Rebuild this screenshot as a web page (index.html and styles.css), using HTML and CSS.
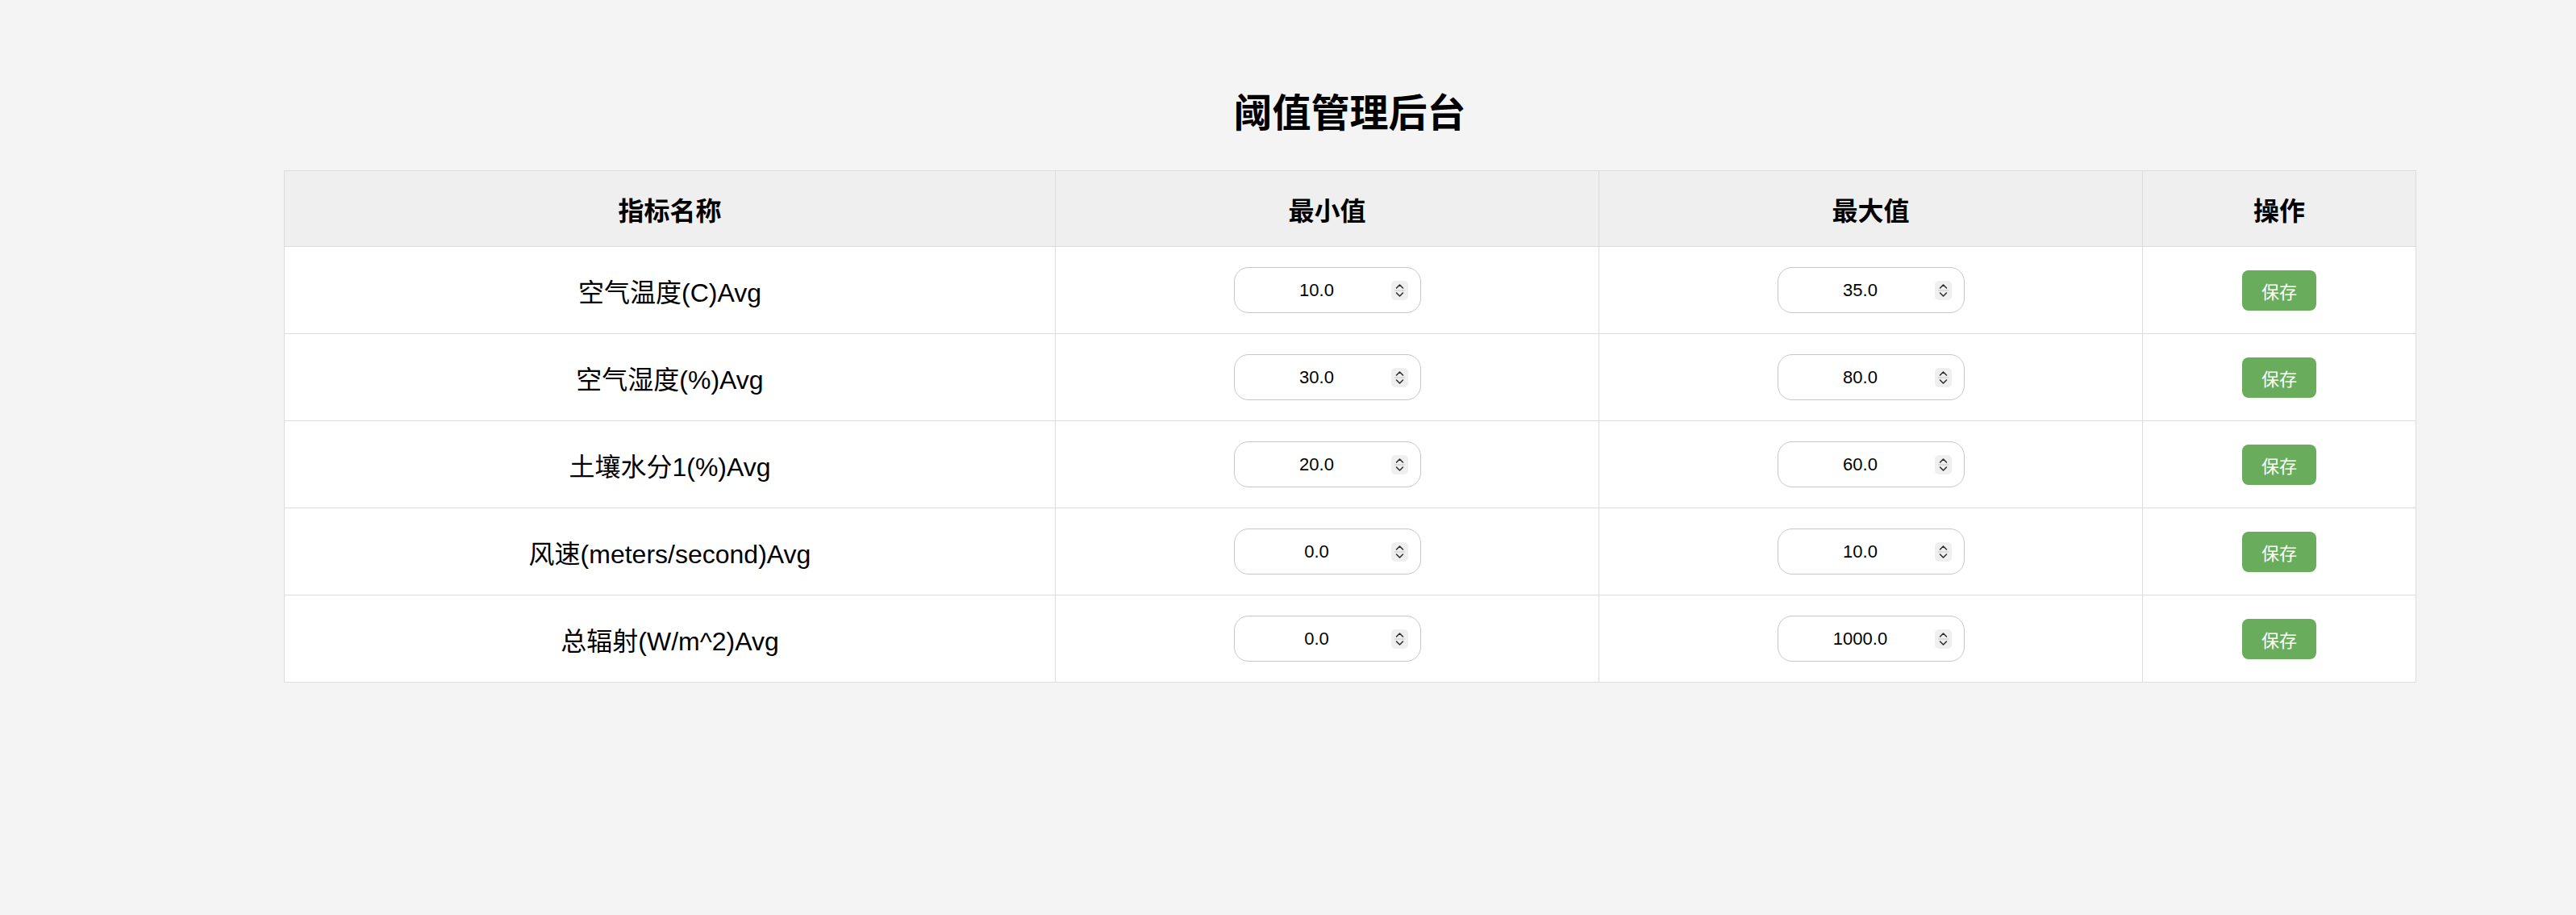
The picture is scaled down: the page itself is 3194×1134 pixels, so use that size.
FILE: index.html
```html
<!DOCTYPE html>
<html lang="zh-CN">
<head>
<meta charset="utf-8">
<title>阈值管理后台</title>
<link rel="stylesheet" href="styles.css">
</head>
<body>
<div class="page">
  <div class="panel">
    <h1 class="title">阈值管理后台</h1>
    <table class="grid">
      <colgroup>
        <col class="c-name"><col class="c-min"><col class="c-max"><col class="c-op">
      </colgroup>
      <thead>
        <tr><th>指标名称</th><th>最小值</th><th>最大值</th><th>操作</th></tr>
      </thead>
      <tbody>
        <tr>
          <td class="name">空气温度(C)Avg</td>
          <td><div class="num"><input class="num-input" type="text" value="10.0"><svg class="spin" viewBox="0 0 21 24" width="21" height="24"><rect x="0" y="0" width="21" height="24" rx="5" fill="#efefef"/><path d="M6.5 9 L10.5 5 L14.5 9" fill="none" stroke="#2a2a2a" stroke-width="1.5" stroke-linecap="round" stroke-linejoin="round"/><line x1="4" y1="12" x2="17" y2="12" stroke="#cfcfcf" stroke-width="1.2"/><path d="M6.5 15 L10.5 19 L14.5 15" fill="none" stroke="#2a2a2a" stroke-width="1.5" stroke-linecap="round" stroke-linejoin="round"/></svg></div></td>
          <td><div class="num"><input class="num-input" type="text" value="35.0"><svg class="spin" viewBox="0 0 21 24" width="21" height="24"><rect x="0" y="0" width="21" height="24" rx="5" fill="#efefef"/><path d="M6.5 9 L10.5 5 L14.5 9" fill="none" stroke="#2a2a2a" stroke-width="1.5" stroke-linecap="round" stroke-linejoin="round"/><line x1="4" y1="12" x2="17" y2="12" stroke="#cfcfcf" stroke-width="1.2"/><path d="M6.5 15 L10.5 19 L14.5 15" fill="none" stroke="#2a2a2a" stroke-width="1.5" stroke-linecap="round" stroke-linejoin="round"/></svg></div></td>
          <td><button class="save" type="button">保存</button></td>
        </tr>
        <tr>
          <td class="name">空气湿度(%)Avg</td>
          <td><div class="num"><input class="num-input" type="text" value="30.0"><svg class="spin" viewBox="0 0 21 24" width="21" height="24"><rect x="0" y="0" width="21" height="24" rx="5" fill="#efefef"/><path d="M6.5 9 L10.5 5 L14.5 9" fill="none" stroke="#2a2a2a" stroke-width="1.5" stroke-linecap="round" stroke-linejoin="round"/><line x1="4" y1="12" x2="17" y2="12" stroke="#cfcfcf" stroke-width="1.2"/><path d="M6.5 15 L10.5 19 L14.5 15" fill="none" stroke="#2a2a2a" stroke-width="1.5" stroke-linecap="round" stroke-linejoin="round"/></svg></div></td>
          <td><div class="num"><input class="num-input" type="text" value="80.0"><svg class="spin" viewBox="0 0 21 24" width="21" height="24"><rect x="0" y="0" width="21" height="24" rx="5" fill="#efefef"/><path d="M6.5 9 L10.5 5 L14.5 9" fill="none" stroke="#2a2a2a" stroke-width="1.5" stroke-linecap="round" stroke-linejoin="round"/><line x1="4" y1="12" x2="17" y2="12" stroke="#cfcfcf" stroke-width="1.2"/><path d="M6.5 15 L10.5 19 L14.5 15" fill="none" stroke="#2a2a2a" stroke-width="1.5" stroke-linecap="round" stroke-linejoin="round"/></svg></div></td>
          <td><button class="save" type="button">保存</button></td>
        </tr>
        <tr>
          <td class="name">土壤水分1(%)Avg</td>
          <td><div class="num"><input class="num-input" type="text" value="20.0"><svg class="spin" viewBox="0 0 21 24" width="21" height="24"><rect x="0" y="0" width="21" height="24" rx="5" fill="#efefef"/><path d="M6.5 9 L10.5 5 L14.5 9" fill="none" stroke="#2a2a2a" stroke-width="1.5" stroke-linecap="round" stroke-linejoin="round"/><line x1="4" y1="12" x2="17" y2="12" stroke="#cfcfcf" stroke-width="1.2"/><path d="M6.5 15 L10.5 19 L14.5 15" fill="none" stroke="#2a2a2a" stroke-width="1.5" stroke-linecap="round" stroke-linejoin="round"/></svg></div></td>
          <td><div class="num"><input class="num-input" type="text" value="60.0"><svg class="spin" viewBox="0 0 21 24" width="21" height="24"><rect x="0" y="0" width="21" height="24" rx="5" fill="#efefef"/><path d="M6.5 9 L10.5 5 L14.5 9" fill="none" stroke="#2a2a2a" stroke-width="1.5" stroke-linecap="round" stroke-linejoin="round"/><line x1="4" y1="12" x2="17" y2="12" stroke="#cfcfcf" stroke-width="1.2"/><path d="M6.5 15 L10.5 19 L14.5 15" fill="none" stroke="#2a2a2a" stroke-width="1.5" stroke-linecap="round" stroke-linejoin="round"/></svg></div></td>
          <td><button class="save" type="button">保存</button></td>
        </tr>
        <tr>
          <td class="name">风速(meters/second)Avg</td>
          <td><div class="num"><input class="num-input" type="text" value="0.0"><svg class="spin" viewBox="0 0 21 24" width="21" height="24"><rect x="0" y="0" width="21" height="24" rx="5" fill="#efefef"/><path d="M6.5 9 L10.5 5 L14.5 9" fill="none" stroke="#2a2a2a" stroke-width="1.5" stroke-linecap="round" stroke-linejoin="round"/><line x1="4" y1="12" x2="17" y2="12" stroke="#cfcfcf" stroke-width="1.2"/><path d="M6.5 15 L10.5 19 L14.5 15" fill="none" stroke="#2a2a2a" stroke-width="1.5" stroke-linecap="round" stroke-linejoin="round"/></svg></div></td>
          <td><div class="num"><input class="num-input" type="text" value="10.0"><svg class="spin" viewBox="0 0 21 24" width="21" height="24"><rect x="0" y="0" width="21" height="24" rx="5" fill="#efefef"/><path d="M6.5 9 L10.5 5 L14.5 9" fill="none" stroke="#2a2a2a" stroke-width="1.5" stroke-linecap="round" stroke-linejoin="round"/><line x1="4" y1="12" x2="17" y2="12" stroke="#cfcfcf" stroke-width="1.2"/><path d="M6.5 15 L10.5 19 L14.5 15" fill="none" stroke="#2a2a2a" stroke-width="1.5" stroke-linecap="round" stroke-linejoin="round"/></svg></div></td>
          <td><button class="save" type="button">保存</button></td>
        </tr>
        <tr>
          <td class="name">总辐射(W/m^2)Avg</td>
          <td><div class="num"><input class="num-input" type="text" value="0.0"><svg class="spin" viewBox="0 0 21 24" width="21" height="24"><rect x="0" y="0" width="21" height="24" rx="5" fill="#efefef"/><path d="M6.5 9 L10.5 5 L14.5 9" fill="none" stroke="#2a2a2a" stroke-width="1.5" stroke-linecap="round" stroke-linejoin="round"/><line x1="4" y1="12" x2="17" y2="12" stroke="#cfcfcf" stroke-width="1.2"/><path d="M6.5 15 L10.5 19 L14.5 15" fill="none" stroke="#2a2a2a" stroke-width="1.5" stroke-linecap="round" stroke-linejoin="round"/></svg></div></td>
          <td><div class="num"><input class="num-input" type="text" value="1000.0"><svg class="spin" viewBox="0 0 21 24" width="21" height="24"><rect x="0" y="0" width="21" height="24" rx="5" fill="#efefef"/><path d="M6.5 9 L10.5 5 L14.5 9" fill="none" stroke="#2a2a2a" stroke-width="1.5" stroke-linecap="round" stroke-linejoin="round"/><line x1="4" y1="12" x2="17" y2="12" stroke="#cfcfcf" stroke-width="1.2"/><path d="M6.5 15 L10.5 19 L14.5 15" fill="none" stroke="#2a2a2a" stroke-width="1.5" stroke-linecap="round" stroke-linejoin="round"/></svg></div></td>
          <td><button class="save" type="button">保存</button></td>
        </tr>
      </tbody>
    </table>
  </div>
</div>
</body>
</html>
```
FILE: styles.css
```css
html, body {
  margin: 0;
  padding: 0;
  background: #f4f4f4;
}
body {
  font-family: "Liberation Sans", "Noto Sans CJK SC", sans-serif;
  color: #000;
}
.page {
  padding: 107px 0 0 352px;
}
.panel {
  width: 2643px;
}
.title {
  margin: 0 0 46px 0;
  font-size: 48px;
  line-height: 58px;
  font-weight: 700;
  text-align: center;
  font-family: "Noto Sans CJK SC", sans-serif;
}
.grid {
  width: 2643px;
  border-collapse: collapse;
  table-layout: fixed;
  border: 1px solid #dcdcdc;
}
.c-name { width: 956px; }
.c-min { width: 674px; }
.c-max { width: 674px; }
.c-op { width: 339px; }
.grid th {
  background: #efefef;
  font-size: 32px;
  font-weight: 700;
  height: 93px;
  padding: 0;
  border: 1px solid #dcdcdc;
  text-align: center;
  vertical-align: middle;
  font-family: "Noto Sans CJK SC", sans-serif;
}
.grid td {
  background: #fff;
  height: 107px;
  padding: 0;
  border: 1px solid #dcdcdc;
  text-align: center;
  vertical-align: middle;
}
.grid td.name {
  font-size: 32px;
}
.num {
  display: inline-flex;
  align-items: center;
  box-sizing: border-box;
  width: 232px;
  height: 57px;
  border: 1px solid #c6c6c6;
  border-radius: 18px;
  background: #fff;
  padding: 0 15px 0 10px;
  vertical-align: middle;
}
.num-input {
  flex: 1;
  min-width: 0;
  border: 0;
  outline: none;
  background: transparent;
  padding: 0;
  margin: 0;
  font-family: "Liberation Sans", sans-serif;
  font-size: 22px;
  color: #000;
  text-align: center;
}
.spin {
  flex: none;
  display: block;
}
.save {
  display: inline-block;
  width: 92px;
  height: 50px;
  border: 0;
  border-radius: 8px;
  background: #68ac5c;
  color: #fff;
  font-family: "Noto Sans CJK SC", sans-serif;
  font-size: 22px;
  padding: 0;
  vertical-align: middle;
  cursor: pointer;
}
```
